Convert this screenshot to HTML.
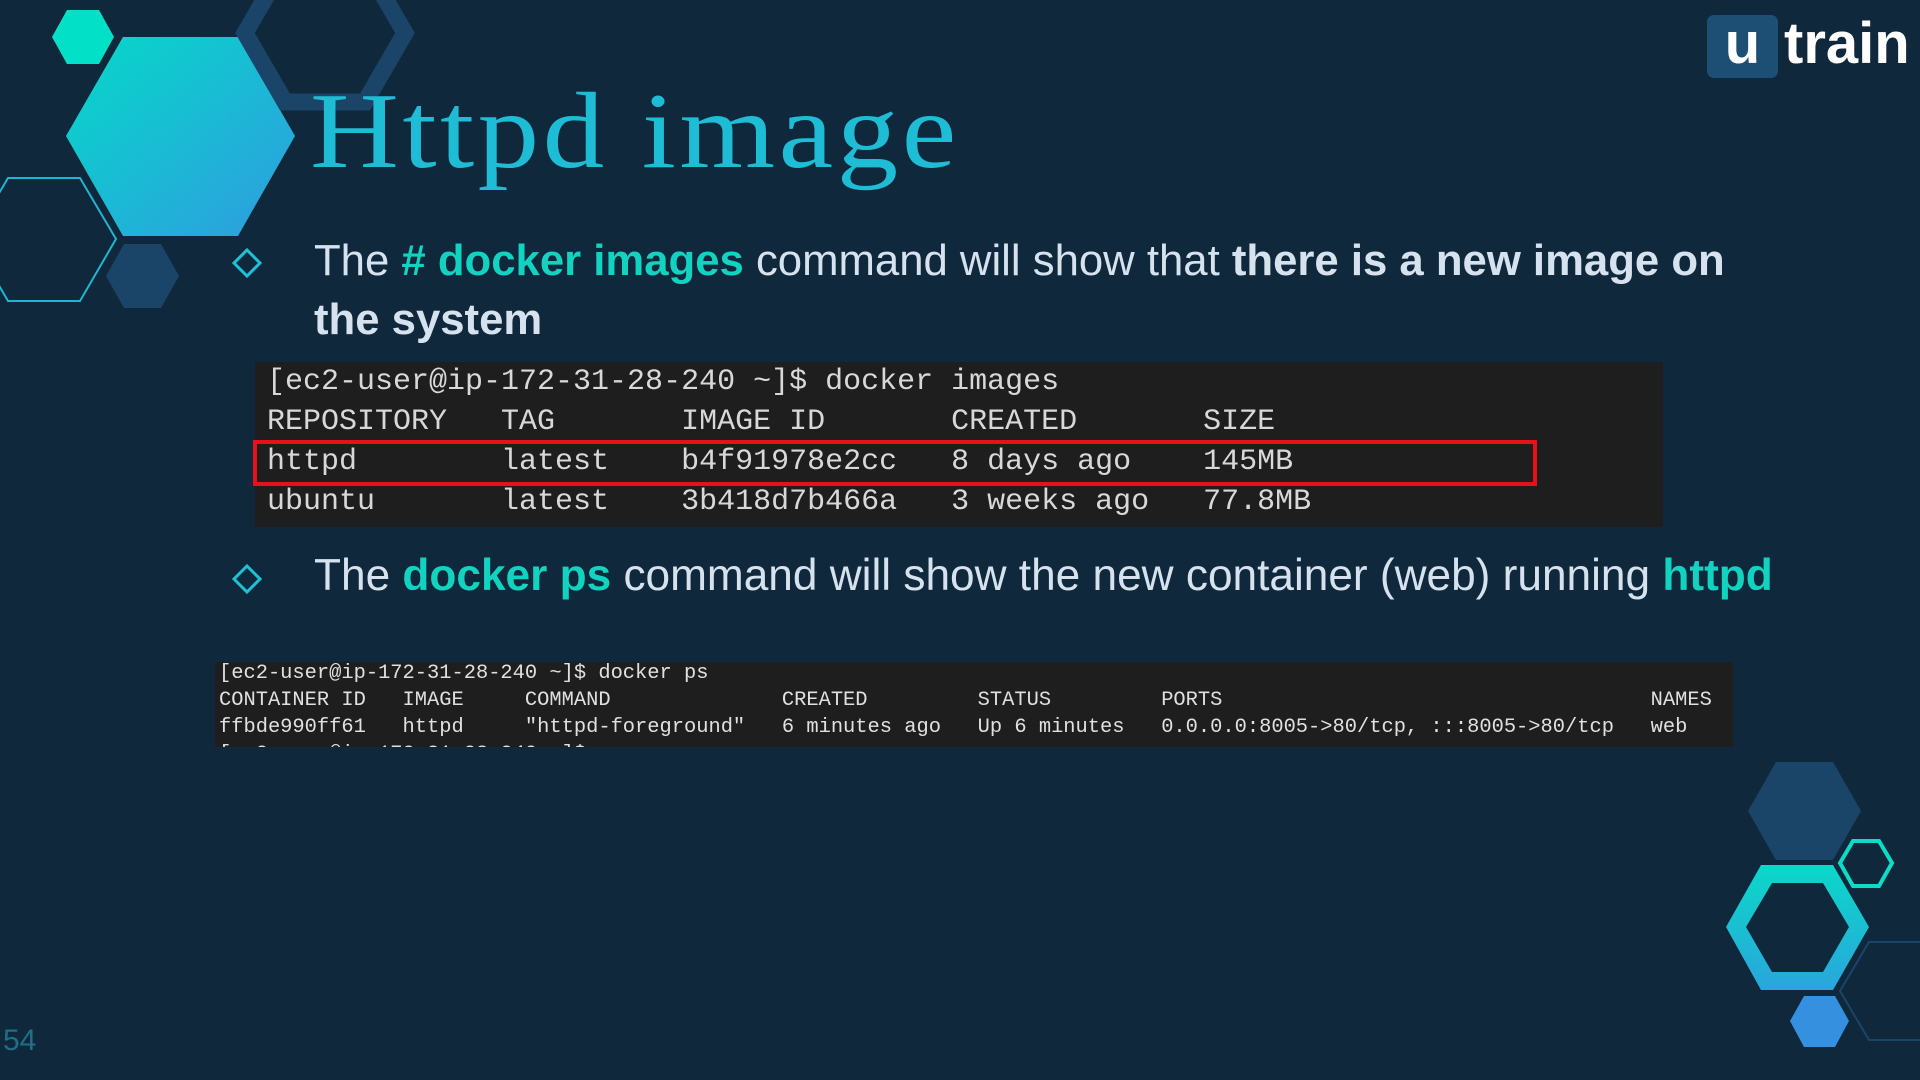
<!DOCTYPE html>
<html><head><meta charset="utf-8"><style>
html,body{margin:0;padding:0;}
body{width:1920px;height:1080px;background:#10283b;position:relative;overflow:hidden;font-family:"Liberation Sans",sans-serif;}
.abs{position:absolute;}
.title{left:310px;top:70px;font-family:"Liberation Serif",serif;font-size:108px;color:#1fbcd6;font-weight:normal;letter-spacing:3px;white-space:nowrap;transform:scaleX(1.14);transform-origin:0 0;}
.b{color:#d6e2ee;font-size:44px;white-space:nowrap;}
.b .g{color:#11d3c0;font-weight:bold;}
.b .w{font-weight:bold;}
.term{background:#1e1e1e;color:#d8d8d8;font-family:"Liberation Mono",monospace;white-space:pre;overflow:hidden;}
.t1{left:255px;top:362px;width:1408px;height:165px;font-size:30px;line-height:40px;}
.t1 div{position:absolute;left:12px;}
.t2{left:215px;top:662px;width:1518px;height:85px;font-size:20.4px;line-height:27px;color:#e0e0e0;}
.t2 div{position:absolute;left:4px;}
</style></head><body>
<svg class="abs" style="left:0;top:0" width="1920" height="1080">
<defs>
<linearGradient id="g1" x1="0" y1="0" x2="1" y2="1"><stop offset="0" stop-color="#05d9c8"/><stop offset="1" stop-color="#2f9ce0"/></linearGradient>
<linearGradient id="g2" x1="0" y1="0" x2="0" y2="1"><stop offset="0" stop-color="#0bd8c8"/><stop offset="1" stop-color="#29a6dc"/></linearGradient>
</defs>
<polygon points="67,10 99,10 114,37 99,64 67,64 52,37" fill="#03e0c8"/>
<polygon points="123,37 238,37 295,136 238,236 123,236 66,136" fill="url(#g1)"/>
<polygon points="285,-36 365,-36 405,33 365,102 285,102 245,33" fill="none" stroke="#1b4568" stroke-width="17"/>
<polygon points="8,178 80,178 116,239 80,301 8,301 -28,239" fill="none" stroke="#1fb6d4" stroke-width="2"/>
<polygon points="124,244 161,244 179,276 161,308 124,308 106,276" fill="#1b4568"/>
<polygon points="247,250 260,263 247,276 234,263" fill="none" stroke="#1fc1d6" stroke-width="3"/>
<polygon points="247,566 260,579 247,592 234,579" fill="none" stroke="#1fc1d6" stroke-width="3"/>
<polygon points="1776,762 1833,762 1861,811 1833,860 1776,860 1748,811" fill="#1b4568"/>
<polygon points="1853,841 1879,841 1892,863 1879,886 1853,886 1840,863" fill="none" stroke="#0bdcc6" stroke-width="4"/>
<polygon points="1761,865 1833,865 1869,927 1833,990 1761,990 1726,927" fill="url(#g2)"/>
<polygon points="1772,883 1823,883 1849,927 1823,972 1772,972 1746,927" fill="#10283b"/>
<polygon points="1804,996 1835,996 1849,1021 1835,1047 1804,1047 1790,1021" fill="#3590e0"/>
<polygon points="1869,942 1930,942 1960,991 1930,1040 1869,1040 1840,991" fill="none" stroke="#1b4568" stroke-width="2"/>
</svg>
<div class="abs" style="left:1707px;top:15px;width:71px;height:63px;background:#1d4f75;border-radius:7px;"></div>
<div class="abs" style="left:1707px;top:10px;width:71px;text-align:center;color:#fff;font-weight:bold;font-size:58px;">u</div>
<div class="abs" style="left:1784px;top:10px;color:#fff;font-weight:bold;font-size:58px;letter-spacing:0px;">train</div>
<div class="abs title">Httpd image</div>
<div class="abs b" style="left:314px;top:236px;font-size:43.7px;">The <span class="g"># docker images</span> command will show that <span class="w">there is a new image on</span></div>
<div class="abs b" style="left:314px;top:295px;font-size:43.7px;"><span class="w">the system</span></div>
<div class="abs term t1">
<div style="top:0">[ec2-user@ip-172-31-28-240 ~]$ docker images</div>
<div style="top:40px">REPOSITORY   TAG       IMAGE ID       CREATED       SIZE</div>
<div style="top:80px">httpd        latest    b4f91978e2cc   8 days ago    145MB</div>
<div style="top:120px">ubuntu       latest    3b418d7b466a   3 weeks ago   77.8MB</div>
</div>
<div class="abs" style="left:253px;top:440px;width:1276px;height:38px;border:4px solid #e8101a;"></div>
<div class="abs b" style="left:314px;top:551px;font-size:44.2px;">The <span class="g">docker ps</span> command will show the new container (web) running <span class="g">httpd</span></div>
<div class="abs term t2">
<div style="top:-2px">[ec2-user@ip-172-31-28-240 ~]$ docker ps</div>
<div style="top:25px">CONTAINER ID   IMAGE     COMMAND              CREATED         STATUS         PORTS                                   NAMES</div>
<div style="top:52px">ffbde990ff61   httpd     "httpd-foreground"   6 minutes ago   Up 6 minutes   0.0.0.0:8005->80/tcp, :::8005->80/tcp   web</div>
<div style="top:79px">[ec2-user@ip-172-31-28-240 ~]$ </div>
</div>
<div class="abs" style="left:3px;top:1024px;color:#1f6f86;font-size:30px;">54</div>
</body></html>
